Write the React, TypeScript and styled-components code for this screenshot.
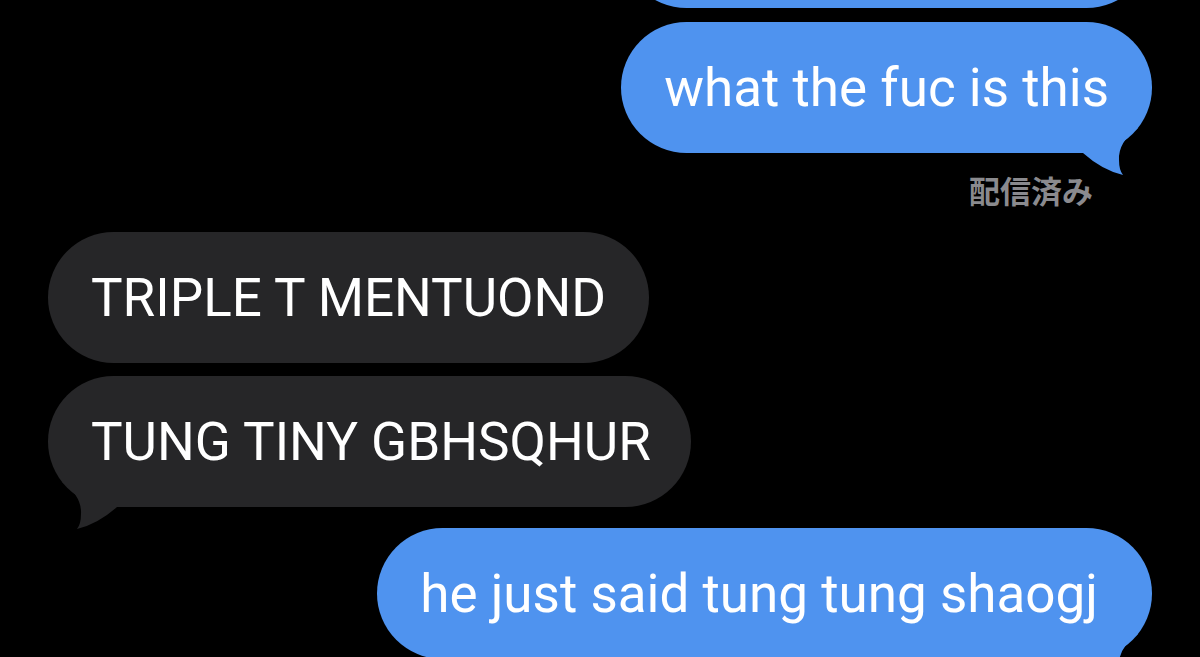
import { FC } from 'react';
import styled, { createGlobalStyle } from 'styled-components';

const GlobalStyle = createGlobalStyle`
  html, body {
    margin: 0;
    padding: 0;
    background: #000;
  }
`;

type Side = 'me' | 'them';

const colors: Record<Side, string> = {
  me: '#4f93ef',
  them: '#262628',
};

type Message = {
  text: string;
  side: Side;
  tail?: boolean;
  padEnd?: number;
};

const Tail: FC<{ side: Side }> = ({ side }) => (
  <TailSvg side={side} width="80" height="50" viewBox="0 0 80 50">
    <path
      d="M0 0 H66 Q46 14 47 32 Q47 42 51 47 Q30 42 11 25 H0 Z"
      fill={colors[side]}
    />
  </TailSvg>
);

const Bubble: FC<Message> = ({ text, side, tail, padEnd = 43 }) => (
  <BubbleBox side={side} padEnd={padEnd}>
    {text}
    {tail && <Tail side={side} />}
  </BubbleBox>
);

const App: FC = () => {
  return (
    <>
      <GlobalStyle />
      <Screen>
        <Thread>
          <Bubble text="what the fuc is this" side="me" />
          <Bubble text="what the fuc is this" side="me" tail />
          <Status>配信済み</Status>
          <Group>
            <Bubble text="TRIPLE T MENTUOND" side="them" />
            <Bubble text="TUNG TINY GBHSQHUR" side="them" tail padEnd={40} />
          </Group>
          <Bubble text="he just said tung tung shaogj" side="me" tail padEnd={54} />
        </Thread>
      </Screen>
    </>
  );
};

export default App;

const Screen = styled.div`
  width: 1200px;
  height: 657px;
  overflow: hidden;
  background: #000;
`;

const Thread = styled.div`
  display: flex;
  flex-direction: column;
  gap: 14px;
  margin-top: -123px;
  padding: 0 48px;
  font-family: Roboto, 'Noto Sans', sans-serif;
`;

const Group = styled.div`
  display: flex;
  flex-direction: column;
  gap: 13px;
  margin-bottom: 7px;
`;

const BubbleBox = styled.div<{ side: Side; padEnd: number }>`
  position: relative;
  align-self: ${(p) => (p.side === 'me' ? 'flex-end' : 'flex-start')};
  display: flex;
  align-items: center;
  box-sizing: border-box;
  height: 131px;
  padding: 0 ${(p) => p.padEnd}px 0 43px;
  border-radius: 66px;
  background: ${(p) => colors[p.side]};
  color: #fff;
  font-size: 53px;
  font-weight: 400;
  white-space: nowrap;
`;

const TailSvg = styled.svg<{ side: Side }>`
  position: absolute;
  bottom: -25px;
  ${(p) => (p.side === 'me' ? 'right: 0;' : 'left: 0; transform: scaleX(-1);')}
`;

const Status = styled.div`
  align-self: flex-end;
  margin: 7px 59px 12px 0;
  color: #8a8a8e;
  font-family: 'Noto Sans CJK JP', sans-serif;
  font-size: 31px;
  font-weight: 700;
  line-height: 32px;
`;
